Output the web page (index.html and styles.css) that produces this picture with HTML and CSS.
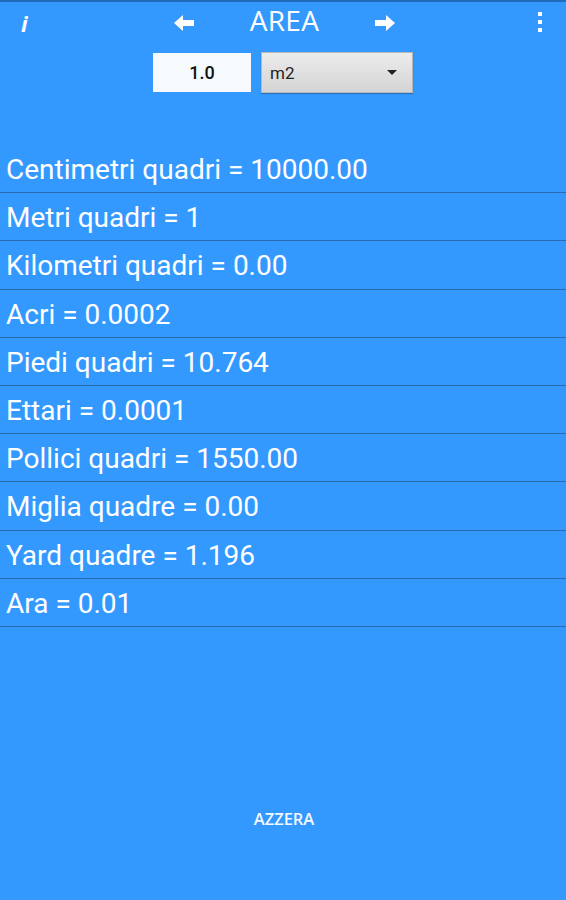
FILE: index.html
```html
<!DOCTYPE html>
<html>
<head>
<meta charset="utf-8">
<link rel="stylesheet" href="styles.css">
</head>
<body>
<div class="app">
  <header class="bar">
    <span class="info">i</span>
    <div class="nav">
      <svg class="arrow" width="22" height="18" viewBox="0 0 22 18"><path d="M1 9 L10 1 L10 6 L21 6 L21 12 L10 12 L10 17 Z" fill="#fff"/></svg>
      <span class="title">AREA</span>
      <svg class="arrow" width="22" height="18" viewBox="0 0 22 18"><path d="M21 9 L12 1 L12 6 L1 6 L1 12 L12 12 L12 17 Z" fill="#fff"/></svg>
    </div>
    <div class="menu"><i></i><i></i><i></i></div>
  </header>
  <div class="controls">
    <div class="input">1.0</div>
    <div class="select"><span>m2</span><span class="caret"></span></div>
  </div>
  <ul class="list">
    <li>Centimetri quadri = 10000.00</li>
    <li>Metri quadri = 1</li>
    <li>Kilometri quadri = 0.00</li>
    <li>Acri = 0.0002</li>
    <li>Piedi quadri = 10.764</li>
    <li>Ettari = 0.0001</li>
    <li>Pollici quadri = 1550.00</li>
    <li>Miglia quadre = 0.00</li>
    <li>Yard quadre = 1.196</li>
    <li>Ara = 0.01</li>
  </ul>
  <div class="footer"><span class="reset">AZZERA</span></div>
</div>
</body>
</html>
```
FILE: styles.css
```css
html, body {
  margin: 0;
  padding: 0;
  background: #3399ff;
}
.app {
  width: 566px;
  height: 900px;
  background: #3399ff;
  border-top: 2px solid #1f6cbd;
  box-sizing: border-box;
  display: flex;
  flex-direction: column;
  font-family: Roboto, "Liberation Sans", sans-serif;
  color: #fff;
}
.bar {
  height: 40px;
  display: flex;
  align-items: center;
  position: relative;
}
.info {
  font-family: "Open Sans", sans-serif;
  font-style: italic;
  font-weight: 700;
  font-size: 22px;
  width: 40px;
  padding-left: 21px;
  box-sizing: border-box;
  margin-top: 1px;
}
.nav {
  flex: 1;
  display: flex;
  justify-content: center;
  align-items: center;
  gap: 55px;
  margin-left: 9px;
}
.arrow { margin-top: 1px; }
.title {
  font-family: "Open Sans", sans-serif;
  font-size: 28px;
  font-weight: 400;
  letter-spacing: 0.3px;
  margin-top: -5px;
}
.menu {
  width: 40px;
  display: flex;
  flex-direction: column;
  align-items: center;
  gap: 4px;
  margin-left: 0;
  margin-right: 6px;
}
.menu i {
  display: block;
  width: 4px;
  height: 4px;
  background: #fff;
}
.controls {
  display: flex;
  justify-content: center;
  align-items: center;
  gap: 10px;
  margin-top: 10px;
}
.input {
  width: 98px;
  height: 39px;
  background: #f7fafd;
  color: #111;
  font-size: 18px;
  font-weight: 500;
  display: flex;
  align-items: center;
  justify-content: center;
  box-sizing: border-box;
}
.select {
  width: 152px;
  height: 41px;
  box-sizing: border-box;
  background: linear-gradient(#ececec, #d4d4d4);
  border: 1px solid #b8b8b8;
  box-shadow: 0 1px 1px rgba(0,0,0,0.25);
  color: #222;
  font-size: 17px;
  display: flex;
  align-items: center;
  justify-content: space-between;
  padding: 0 15px 0 8px;
}
.caret {
  width: 0;
  height: 0;
  border-left: 5px solid transparent;
  border-right: 5px solid transparent;
  border-top: 5px solid #222;
}
.list {
  list-style: none;
  margin: 52px 0 0 0;
  padding: 0;
}
.list li {
  height: 48.2px;
  box-sizing: border-box;
  border-bottom: 1.3px solid #2a6bb0;
  font-size: 28px;
  padding-left: 6px;
  display: flex;
  align-items: center;
  padding-top: 2px;
}
.footer {
  flex: 1;
  display: flex;
  justify-content: center;
  align-items: flex-start;
  padding-top: 180px;
}
.reset {
  font-family: "Open Sans", sans-serif;
  font-size: 16.5px;
  font-weight: 600;
  margin-left: 2px;
  color: #f4f8ff;
}
```
